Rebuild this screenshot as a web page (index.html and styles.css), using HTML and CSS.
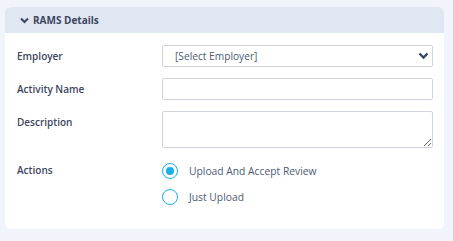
FILE: index.html
```html
<!DOCTYPE html>
<html lang="en">
<head>
  <meta charset="UTF-8" />
  <title>RAMS Details</title>
  <meta name="viewport" content="width=device-width, initial-scale=1.0"/>
  <link rel="stylesheet" href="styles.css">
</head>
<body>

  <div class="card">
    <div class="card-header">
      <svg class="chevron" width="9" height="7" viewBox="0 0 9 7"><path d="M1 1.5 L4.5 5 L8 1.5" fill="none" stroke="#3a4560" stroke-width="2"/></svg>
      <span>RAMS Details</span>
    </div>

    <form class="card-body">
      <label class="field-label" for="employer">Employer</label>
      <div class="select-box">
        <span>[Select Employer]</span>
        <svg width="11" height="8" viewBox="0 0 11 8"><path d="M1.5 1.5 L5.5 5.5 L9.5 1.5" fill="none" stroke="#3a4560" stroke-width="2.4"/></svg>
      </div>

      <label class="field-label" for="activity">Activity Name</label>
      <input type="text" id="activity" class="text-input" />

      <label class="field-label" for="description">Description</label>
      <textarea id="description" class="text-area"></textarea>

      <label class="field-label">Actions</label>
      <div class="radio-group">
        <label class="radio"><span class="radio-dot checked"></span> Upload And Accept Review</label>
        <label class="radio"><span class="radio-dot"></span> Just Upload</label>
      </div>
    </form>
  </div>

</body>
</html>
```

FILE: styles.css
```css
body {
  margin: 0;
  background-color: #f1f4fb;
  font-family: 'Open Sans', sans-serif;
  font-size: 10px;
  color: #3d4660;
}

.card {
  margin: 7px 9px 0 5px;
  height: 222px;
  background-color: #fff;
  border-radius: 6px;
  overflow: hidden;
}

.card-header {
  display: flex;
  align-items: center;
  gap: 4px;
  height: 26px;
  padding-left: 15px;
  background-color: #e1e7f2;
  font-weight: bold;
  font-size: 10px;
}

.chevron {
  margin-top: 1px;
}

.card-body {
  display: grid;
  grid-template-columns: 145px 1fr;
  row-gap: 11px;
  padding: 12px 11px 0 12px;
}

.field-label {
  font-weight: 600;
  line-height: 22px;
  align-self: start;
}

.select-box,
.text-input,
.text-area {
  box-sizing: border-box;
  border: 1px solid #cfd4db;
  border-radius: 2px;
  height: 22px;
  width: 100%;
  margin: 0;
  background: #fff;
}

.select-box {
  display: flex;
  justify-content: space-between;
  align-items: center;
  padding: 0 3px 0 12px;
  color: #4d5a73;
  font-size: 10.2px;
}

.text-area {
  height: 37px;
  resize: vertical;
}

.radio-group {
  display: flex;
  flex-direction: column;
  gap: 10px;
  margin-top: 4px;
}

.radio {
  display: flex;
  align-items: center;
  gap: 11px;
  height: 16px;
  color: #4d5a73;
  font-size: 10.3px;
}

.radio-dot {
  box-sizing: border-box;
  width: 16px;
  height: 16px;
  border: 1.5px solid #18aee6;
  border-radius: 50%;
  display: flex;
  align-items: center;
  justify-content: center;
}

.radio-dot.checked::after {
  content: "";
  width: 8px;
  height: 8px;
  border-radius: 50%;
  background-color: #18aee6;
}
```
